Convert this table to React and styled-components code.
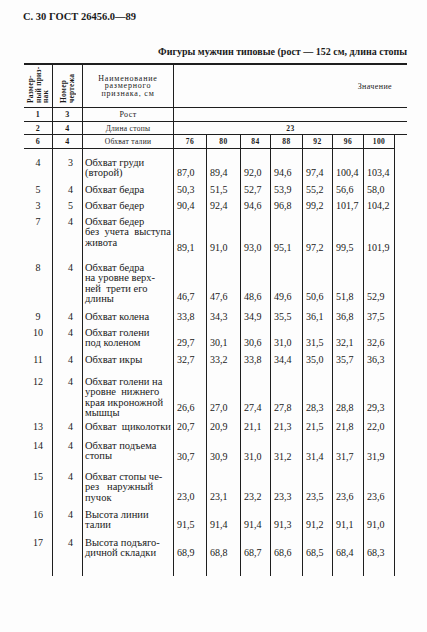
import React from 'react'
import styled, { createGlobalStyle } from 'styled-components'

const GlobalStyle = createGlobalStyle`
    html, body {
        margin: 0;
        padding: 0;
        background: #fdfdfd;
    }
    body {
        font-family: 'Liberation Serif', 'DejaVu Serif', serif;
        color: #1a1a1a;
    }
`

const INK = '#1e1e1e'

const Page = styled.div`
    width: 427px;
    height: 632px;
    padding-top: 11px;
    box-sizing: border-box;
    overflow: hidden;
`

const RunningHead = styled.div`
    padding-left: 23px;
    font-size: 10.5px;
    line-height: 12px;
    font-weight: bold;
    white-space: nowrap;
`

const Caption = styled.div`
    margin-top: 23px;
    padding-right: 20px;
    text-align: right;
    font-size: 10px;
    line-height: 12px;
    font-weight: bold;
    white-space: nowrap;
`

const TableWrap = styled.div`
    padding: 5px 0 0 24px;
`

const Table = styled.table`
    width: 383px;
    table-layout: fixed;
    border-collapse: separate;
    border-spacing: 0;
`

const Row = styled.tr`
    height: ${(p) => p.$h}px;
`

// cell of the head part (header + rows 1, 2, 6)
const HeadCell = styled.td`
    padding: 0;
    text-align: center;
    vertical-align: ${(p) => (p.$bottom ? 'bottom' : 'middle')};
    white-space: nowrap;
    font-size: ${(p) => p.$fs || 8}px;
    font-weight: ${(p) => (p.$bold ? 'bold' : 'normal')};
    letter-spacing: ${(p) => (p.$ls === undefined ? 0.4 : p.$ls)}px;
    line-height: 9px;
    border-top: ${(p) => (p.$top ? `2px solid ${INK}` : 'none')};
    border-bottom: ${(p) => (p.$rule ? `${p.$rule}px solid ${INK}` : 'none')};
    border-right: ${(p) => (p.$open ? 'none' : `1px solid ${INK}`)};
`

const RotText = styled.div`
    display: inline-block;
    writing-mode: vertical-rl;
    transform: rotate(180deg);
    height: 38px;
    font-size: 7.5px;
    line-height: 7.5px;
    font-weight: bold;
    letter-spacing: 0.2px;
    text-align: left;
    margin-bottom: 2px;
`

const NameHead = styled.div`
    font-size: 8px;
    line-height: 7.5px;
    letter-spacing: 0.8px;
`

const ValueHead = styled.div`
    text-align: right;
    padding-right: 15px;
    font-size: 8px;
    letter-spacing: 0.4px;
`

const NumCell = styled.td`
    padding: ${(p) => p.$pt}px 0 0 ${(p) => p.$shift || 0}px;
    vertical-align: top;
    text-align: center;
    font-size: 10px;
    line-height: 10.5px;
    border-right: 1px solid ${INK};
`

const NameCell = styled.td`
    padding: ${(p) => p.$pt}px 0 0 2px;
    vertical-align: top;
    font-size: 10.5px;
    line-height: 10.5px;
    white-space: pre;
    border-right: 1px solid ${INK};
`

const Line = styled.div``

const ValueCell = styled.td`
    padding: ${(p) => p.$pt}px 0 0 3px;
    vertical-align: top;
    font-size: 10px;
    line-height: 10.5px;
    white-space: nowrap;
    border-right: 1px solid ${INK};
`

const Blank = styled.td`
    padding: 0;
`

const widths = [29, 30, 91, 33, 34, 30, 32, 30, 31, 31, 12]
const sizes = ['76', '80', '84', '88', '92', '96', '100']

const rows = [
    { n: '4', d: '3', h: 32.5, pt: 8.5, vo: 10, lines: ['Обхват груди', '(второй)'], vals: ['87,0', '89,4', '92,0', '94,6', '97,4', '100,4', '103,4'] },
    { n: '5', d: '4', h: 16, vo: 0, lines: ['Обхват бедра'], vals: ['50,3', '51,5', '52,7', '53,9', '55,2', '56,6', '58,0'] },
    { n: '3', d: '5', h: 16, vo: 0, lines: ['Обхват бедер'], vals: ['90,4', '92,4', '94,6', '96,8', '99,2', '101,7', '104,2'] },
    { n: '7', d: '4', h: 46, vo: 26, lines: ['Обхват бедер', 'без  учета  выступа', 'живота'], vals: ['89,1', '91,0', '93,0', '95,1', '97,2', '99,5', '101,9'] },
    { n: '8', d: '4', h: 49, vo: 29, lines: ['Обхват бедра', 'на уровне верх-', 'ней  трети его', 'длины'], vals: ['46,7', '47,6', '48,6', '49,6', '50,6', '51,8', '52,9'] },
    { n: '9', d: '4', h: 16, vo: 0, lines: ['Обхват колена'], vals: ['33,8', '34,3', '34,9', '35,5', '36,1', '36,8', '37,5'] },
    { n: '10', d: '4', h: 27, vo: 10, lines: ['Обхват голени', 'под коленом'], vals: ['29,7', '30,1', '30,6', '31,0', '31,5', '32,1', '32,6'] },
    { n: '11', d: '4', h: 22, vo: 0, lines: ['Обхват икры'], vals: ['32,7', '33,2', '33,8', '34,4', '35,0', '35,7', '36,3'] },
    { n: '12', d: '4', h: 45, vo: 26, lines: ['Обхват голени на', 'уровне  нижнего', 'края икроножной', 'мышцы'], vals: ['26,6', '27,0', '27,4', '27,8', '28,3', '28,8', '29,3'] },
    { n: '13', d: '4', h: 19, vo: 0, lines: ['Обхват  щиколотки'], vals: ['20,7', '20,9', '21,1', '21,3', '21,5', '21,8', '22,0'] },
    { n: '14', d: '4', h: 31, vo: 11, lines: ['Обхват подъема', 'стопы'], vals: ['30,7', '30,9', '31,0', '31,2', '31,4', '31,7', '31,9'] },
    { n: '15', d: '4', h: 38, vo: 20, lines: ['Обхват стопы че-', 'рез   наружный', 'пучок'], vals: ['23,0', '23,1', '23,2', '23,3', '23,5', '23,6', '23,6'] },
    { n: '16', d: '4', h: 28, vo: 10, lines: ['Высота линии', 'талии'], vals: ['91,5', '91,4', '91,4', '91,3', '91,2', '91,1', '91,0'] },
    { n: '17', d: '4', h: 41.5, vo: 10, lines: ['Высота подъяго-', 'дичной складки'], vals: ['68,9', '68,8', '68,7', '68,6', '68,5', '68,4', '68,3'] },
]

const DataRow = ({ row }) => {
    const pt = row.pt || 3
    return (
        <Row $h={row.h}>
            <NumCell $pt={pt}>{row.n}</NumCell>
            <NumCell $pt={pt} $shift={6}>{row.d}</NumCell>
            <NameCell $pt={pt}>
                {row.lines.map((l, i) => (
                    <Line key={i}>{l}</Line>
                ))}
            </NameCell>
            {row.vals.map((v, i) => (
                <ValueCell key={i} $pt={pt + row.vo}>
                    {v}
                </ValueCell>
            ))}
            <Blank />
        </Row>
    )
}

const App = () => {
    return (
        <Page>
            <GlobalStyle />
            <RunningHead>С. 30 ГОСТ 26456.0—89</RunningHead>
            <Caption>Фигуры мужчин типовые (рост — 152 см, длина стопы</Caption>
            <TableWrap>
                <Table>
                    <colgroup>
                        {widths.map((w, i) => (
                            <col key={i} style={{ width: w }} />
                        ))}
                    </colgroup>
                    <tbody>
                        <Row $h={45}>
                            <HeadCell $top $rule={1.5} $bottom>
                                <RotText>
                                    Размер-
                                    <br />
                                    ный приз-
                                    <br />
                                    нак
                                </RotText>
                            </HeadCell>
                            <HeadCell $top $rule={1.5} $bottom>
                                <RotText>
                                    Номер
                                    <br />
                                    чертежа
                                </RotText>
                            </HeadCell>
                            <HeadCell $top $rule={1.5}>
                                <NameHead>
                                    Наименование
                                    <br />
                                    размерного
                                    <br />
                                    признака, см
                                </NameHead>
                            </HeadCell>
                            <HeadCell $top $rule={1.5} $open colSpan={8}>
                                <ValueHead>Значение</ValueHead>
                            </HeadCell>
                        </Row>
                        <Row $h={14}>
                            <HeadCell $rule={1} $bold>1</HeadCell>
                            <HeadCell $rule={1} $bold>3</HeadCell>
                            <HeadCell $rule={1}>Рост</HeadCell>
                            <HeadCell $rule={1} $open colSpan={8} />
                        </Row>
                        <Row $h={13}>
                            <HeadCell $rule={1} $bold>2</HeadCell>
                            <HeadCell $rule={1} $bold>4</HeadCell>
                            <HeadCell $rule={1} $fs={7.5} $ls={0.3}>Длина стопы</HeadCell>
                            <HeadCell $rule={1} $open $bold $fs={7.5} colSpan={8}>23</HeadCell>
                        </Row>
                        <Row $h={14}>
                            <HeadCell $rule={1} $bold>6</HeadCell>
                            <HeadCell $rule={1} $bold>4</HeadCell>
                            <HeadCell $rule={1} $fs={7.5} $ls={0.3}>Обхват талии</HeadCell>
                            {sizes.map((s) => (
                                <HeadCell key={s} $rule={1} $bold $fs={7.5}>
                                    {s}
                                </HeadCell>
                            ))}
                            <HeadCell $open />
                        </Row>
                        {rows.map((r) => (
                            <DataRow key={r.n} row={r} />
                        ))}
                    </tbody>
                </Table>
            </TableWrap>
        </Page>
    )
}

export default App
